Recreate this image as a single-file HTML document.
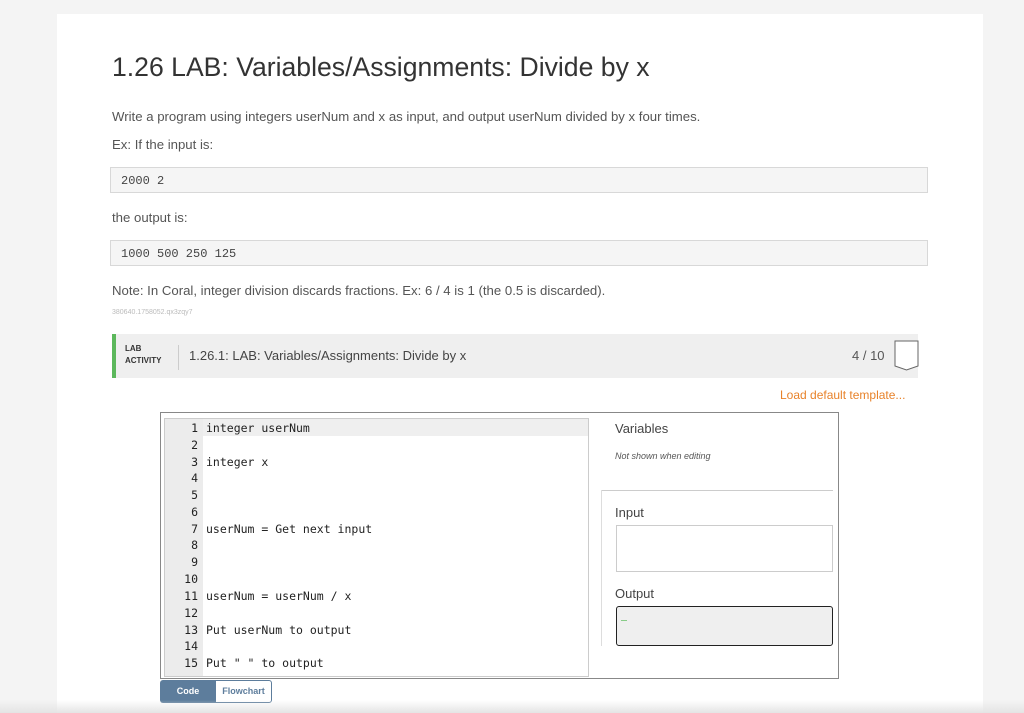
<!DOCTYPE html><html><head><style>
html,body{margin:0;width:1024px;height:713px;overflow:hidden}
body{background:#f4f4f4;font-family:"Liberation Sans",sans-serif;position:relative}
.card{position:absolute;left:57px;top:14px;width:926px;height:699px;background:#fff}
.a{position:absolute}
.t{color:#555;font-size:13.2px}
.pre{position:absolute;left:110px;height:26px;background:#f5f5f5;border:1px solid #d8d8d8;font-family:"Liberation Mono",monospace;font-size:12px;color:#444;line-height:26px;padding-left:10px;box-sizing:border-box;width:818px}
.code{font-family:"DejaVu Sans Mono",monospace;font-size:11.5px;color:#222}
.ln{position:absolute;left:164px;width:34px;text-align:right}
.cl{position:absolute;left:206px}
</style></head><body>
<div class="card"></div>
<div class="a" style="left:112px;top:52px;font-size:26.6px;color:#333">1.26 LAB: Variables/Assignments: Divide by x</div>
<div class="a t" style="left:112px;top:109px">Write a program using integers userNum and x as input, and output userNum divided by x four times.</div>
<div class="a t" style="left:112px;top:137px">Ex: If the input is:</div>
<div class="pre" style="top:167px">2000 2</div>
<div class="a t" style="left:112px;top:210px">the output is:</div>
<div class="pre" style="top:240px">1000 500 250 125</div>
<div class="a t" style="left:112px;top:283px">Note: In Coral, integer division discards fractions. Ex: 6 / 4 is 1 (the 0.5 is discarded).</div>
<div class="a" style="left:112px;top:309px;font-size:7px;color:#bbb">380640.1758052.qx3zqy7</div>
<div class="a" style="left:112px;top:334px;width:806px;height:44px;background:#efefef;border-left:4px solid #5cb85c;box-sizing:border-box"></div>
<div class="a" style="left:125px;top:343px;font-size:8px;font-weight:bold;color:#333;line-height:12px">LAB<br>ACTIVITY</div>
<div class="a" style="left:178px;top:345px;width:1px;height:25px;background:#ccc"></div>
<div class="a" style="left:189px;top:348px;font-size:13px;color:#444">1.26.1: LAB: Variables/Assignments: Divide by x</div>
<div class="a" style="left:852px;top:348px;font-size:13px;color:#555">4 / 10</div>
<svg class="a" style="left:894px;top:340px" width="26" height="32"><path d="M1 1H24V26L12.5 30L1 26Z" fill="#fff" stroke="#666" stroke-width="1"/></svg>
<div class="a" style="left:780px;top:388px;font-size:12px;color:#e8822a">Load default template...</div>
<div class="a" style="left:160px;top:412px;width:679px;height:267px;border:1px solid #888;box-sizing:border-box"></div>
<div class="a" style="left:164px;top:418px;width:425px;height:259px;border:1px solid #ccc;box-sizing:border-box"></div>
<div class="a" style="left:165px;top:419px;width:38px;height:257px;background:#ececec"></div>
<div class="a" style="left:203px;top:419px;width:385px;height:17px;background:#efefef"></div>
<div class="code">
<div class="ln" style="top:421px">1</div><div class="cl" style="top:421px">integer userNum</div>
<div class="ln" style="top:438px">2</div>
<div class="ln" style="top:455px">3</div><div class="cl" style="top:455px">integer x</div>
<div class="ln" style="top:471px">4</div>
<div class="ln" style="top:488px">5</div>
<div class="ln" style="top:505px">6</div>
<div class="ln" style="top:522px">7</div><div class="cl" style="top:522px">userNum = Get next input</div>
<div class="ln" style="top:538px">8</div>
<div class="ln" style="top:555px">9</div>
<div class="ln" style="top:572px">10</div>
<div class="ln" style="top:589px">11</div><div class="cl" style="top:589px">userNum = userNum / x</div>
<div class="ln" style="top:606px">12</div>
<div class="ln" style="top:623px">13</div><div class="cl" style="top:623px">Put userNum to output</div>
<div class="ln" style="top:639px">14</div>
<div class="ln" style="top:656px">15</div><div class="cl" style="top:656px">Put " " to output</div>
</div>
<div class="a" style="left:615px;top:421px;font-size:13px;color:#444">Variables</div>
<div class="a" style="left:615px;top:451px;font-size:9px;font-style:italic;color:#555">Not shown when editing</div>
<div class="a" style="left:601px;top:490px;width:232px;height:1px;background:#ccc"></div>
<div class="a" style="left:601px;top:490px;width:1px;height:156px;background:#ddd"></div>
<div class="a" style="left:615px;top:505px;font-size:13px;color:#444">Input</div>
<div class="a" style="left:616px;top:525px;width:217px;height:47px;border:1px solid #ccc;box-sizing:border-box"></div>
<div class="a" style="left:615px;top:586px;font-size:13px;color:#444">Output</div>
<div class="a" style="left:616px;top:606px;width:217px;height:40px;border:1px solid #222;border-radius:3px;background:#efefef;box-sizing:border-box"></div>
<div class="a" style="left:621px;top:620px;width:6px;height:1px;background:#8c8"></div>
<div class="a" style="left:160px;top:680px;width:56px;height:23px;background:#5d7d9c;border-radius:3px 0 0 3px;color:#fff;font-size:9px;font-weight:bold;text-align:center;line-height:22px">Code</div>
<div class="a" style="left:215px;top:680px;width:57px;height:23px;background:#fff;border:1px solid #5d7d9c;border-radius:0 3px 3px 0;box-sizing:border-box;color:#5d7d9c;font-size:9px;font-weight:bold;text-align:center;line-height:21px">Flowchart</div>
<div class="a" style="left:0;top:700px;width:1024px;height:13px;background:linear-gradient(#fff0,#e4e4e4)"></div>
</body></html>
